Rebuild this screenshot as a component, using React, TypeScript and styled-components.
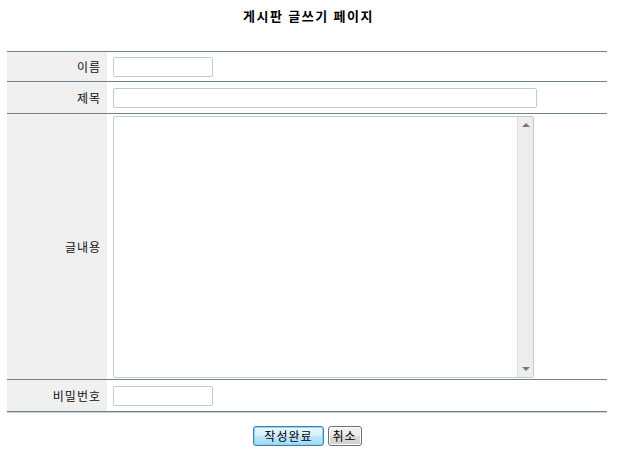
import React from 'react';
import styled, { createGlobalStyle } from 'styled-components';

const GlobalStyle = createGlobalStyle`
  body {
    margin: 0;
    background: #ffffff;
    font-family: "Noto Sans CJK KR", "Noto Sans", sans-serif;
    font-size: 12px;
    color: #111;
  }
`;

const Page = styled.div`
  width: 617px;
  padding-top: 6px;
  display: flex;
  flex-direction: column;
  align-items: center;
`;

const Title = styled.h1`
  margin: 0;
  height: 20px;
  line-height: 20px;
  font-size: 13px;
  font-weight: 700;
  letter-spacing: 1.6px;
  color: #000;
`;

const Form = styled.div`
  margin-top: 25px;
  margin-left: -3px;
  width: 600px;
  border-bottom: 1px solid #6f8189;
  box-shadow: 0 1px 0 #c9d0d3;
`;

const Row = styled.div<{ $height: number }>`
  display: grid;
  grid-template-columns: 100px 1fr;
  height: ${p => p.$height}px;
  border-top: 1px solid #6f8189;
`;

const Label = styled.div`
  background: #f0f0f0;
  display: flex;
  align-items: center;
  justify-content: flex-end;
  padding-right: 6px;
  font-size: 12px;
  letter-spacing: 1px;
  color: #111;
`;

const Field = styled.div`
  display: flex;
  align-items: center;
  padding-left: 6px;
`;

const TextInput = styled.input<{ $width: number }>`
  box-sizing: border-box;
  width: ${p => p.$width}px;
  height: 20px;
  border: 1px solid #c2cad0;
  border-radius: 2px;
  background: #fff;
  padding: 0 3px;
  font: inherit;
  outline: none;
`;

const AreaWrap = styled.div`
  position: relative;
  width: 421px;
  height: 262px;
`;

const TextArea = styled.textarea`
  box-sizing: border-box;
  width: 100%;
  height: 100%;
  border: 1px solid #c2cad0;
  border-radius: 2px;
  resize: none;
  overflow: hidden;
  padding: 2px 20px 2px 3px;
  font: inherit;
  outline: none;
`;

const ScrollBar = styled.div`
  position: absolute;
  top: 1px;
  right: 1px;
  bottom: 1px;
  width: 16px;
  background: #ededed;
  border-left: 1px solid #e2e2e2;
  display: flex;
  flex-direction: column;
  justify-content: space-between;
  align-items: center;
  padding: 6px 0;
  box-sizing: border-box;
`;

const Arrow = styled.div<{ $down?: boolean }>`
  width: 0;
  height: 0;
  border-left: 4px solid transparent;
  border-right: 4px solid transparent;
  ${p =>
    p.$down
      ? 'border-top: 4px solid #777;'
      : 'border-bottom: 4px solid #777;'}
`;

const Buttons = styled.div`
  display: flex;
  gap: 4px;
  margin-top: 14px;
  margin-left: -2px;
`;

const Button = styled.button<{ $primary?: boolean }>`
  height: 20px;
  padding: 0 ${p => (p.$primary ? 10 : 4)}px;
  font-family: "Noto Sans CJK KR", "Noto Sans", sans-serif;
  font-size: 12px;
  letter-spacing: 1px;
  line-height: 16px;
  color: #000;
  border-radius: 3px;
  border: 1px solid ${p => (p.$primary ? '#3c7fb1' : '#707070')};
  background: ${p =>
    p.$primary
      ? 'linear-gradient(#eaf6fd, #d7effc 50%, #bde6fd 51%, #a6d9f4)'
      : 'linear-gradient(#f2f2f2, #ebebeb 50%, #dddddd 51%, #cfcfcf)'};
  box-shadow: inset 0 0 0 1px ${p => (p.$primary ? '#8fd3f5' : '#fcfcfc')};
  cursor: pointer;
`;

export default function App() {
  return (
    <Page>
      <GlobalStyle />
      <Title>게시판 글쓰기 페이지</Title>
      <Form>
        <Row $height={29}>
          <Label>이름</Label>
          <Field>
            <TextInput $width={100} />
          </Field>
        </Row>
        <Row $height={31}>
          <Label>제목</Label>
          <Field>
            <TextInput $width={424} />
          </Field>
        </Row>
        <Row $height={265}>
          <Label>글내용</Label>
          <Field>
            <AreaWrap>
              <TextArea />
              <ScrollBar>
                <Arrow />
                <Arrow $down />
              </ScrollBar>
            </AreaWrap>
          </Field>
        </Row>
        <Row $height={31}>
          <Label>비밀번호</Label>
          <Field>
            <TextInput $width={100} type="password" />
          </Field>
        </Row>
      </Form>
      <Buttons>
        <Button $primary>작성완료</Button>
        <Button>취소</Button>
      </Buttons>
    </Page>
  );
}
